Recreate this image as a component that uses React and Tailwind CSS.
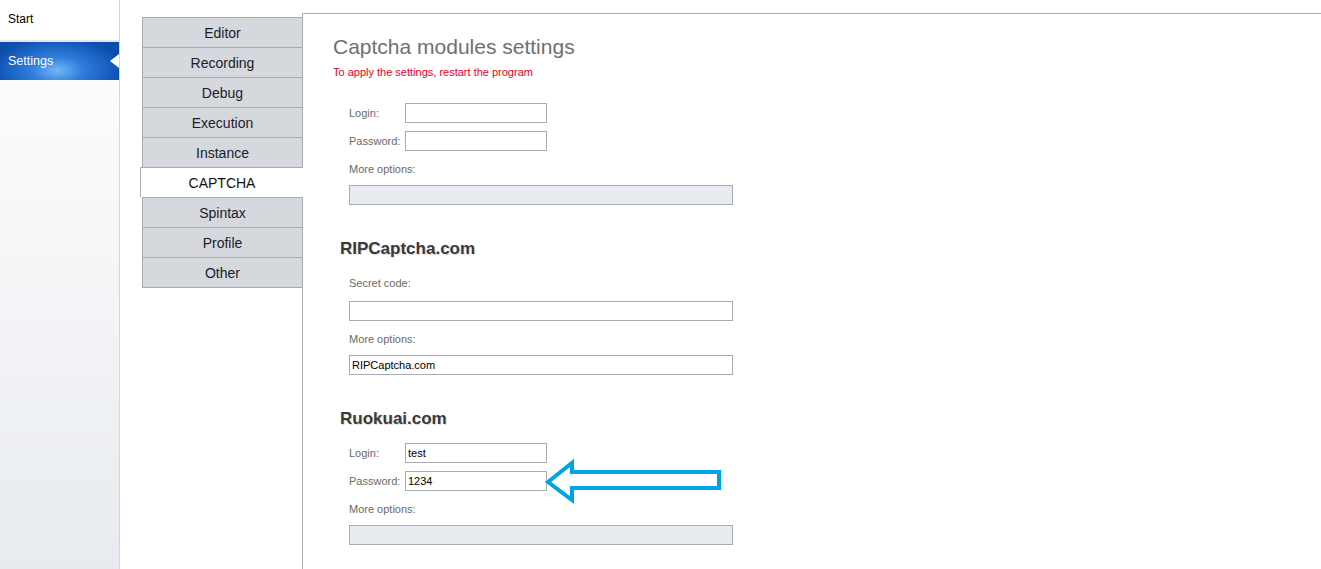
import React from 'react'

const tabs = ['Editor', 'Recording', 'Debug', 'Execution', 'Instance', 'CAPTCHA', 'Spintax', 'Profile', 'Other']

function Label({ children, className = '' }) {
  return (
    <div className={`h-[20px] flex items-center text-[11px] text-[#6a6a6a] ${className}`}>{children}</div>
  )
}

function SmallField({ label, value, className = '' }) {
  return (
    <div className={`flex items-center h-[20px] ${className}`}>
      <div className="w-[56px] text-[11px] text-[#6a6a6a]">{label}</div>
      <div className="w-[142px] h-[20px] border border-[#a9adb3] bg-white flex items-center px-[2px] text-[11px] text-black">
        {value}
      </div>
    </div>
  )
}

function WideField({ value, disabled, className = '' }) {
  return (
    <div
      className={`w-[384px] h-[20px] border border-[#a9adb3] flex items-center px-[2px] text-[11px] text-black ${
        disabled ? 'bg-[#e8ebef]' : 'bg-white'
      } ${className}`}
    >
      {value}
    </div>
  )
}

function SectionTitle({ children, className = '' }) {
  return (
    <div
      className={`ml-[7px] h-[24px] pt-[2px] flex items-center text-[17px] font-bold text-[#3a3a3a] [text-shadow:1px_1px_1px_rgba(0,0,0,0.15)] ${className}`}
    >
      {children}
    </div>
  )
}

export default function App() {
  return (
    <div className="relative flex w-[1321px] h-[569px] overflow-hidden bg-white font-['Liberation_Sans',Arial,sans-serif]">
      {/* left menu */}
      <div className="w-[120px] h-full border-r border-[#d3d6db] bg-gradient-to-b from-white to-[#e8ebef] shrink-0">
        <div className="h-[40px] pt-[12px] pl-[8px] text-[12px] leading-[14px] text-black bg-white">Start</div>
        <div className="h-[2px] bg-[#e4e7eb]" />
        <div className="relative h-[38px] flex items-center pl-[8px] pt-[1px] text-[12.5px] text-white bg-[radial-gradient(ellipse_55%_90%_at_48%_75%,#72b8f8_0%,#2f7ddb_40%,#0c4eae_100%)]">
          Settings
          <div className="absolute right-0 top-[12px] w-0 h-0 border-y-[7px] border-y-transparent border-r-[9px] border-r-white" />
        </div>
      </div>

      {/* tabs */}
      <div className="ml-[22px] w-[160px] pt-[17px] shrink-0">
        {tabs.map((t, i) => {
          const active = t === 'CAPTCHA'
          const last = i === tabs.length - 1
          return (
            <div
              key={t}
              className={`h-[30px] pt-[1px] flex items-center justify-center text-[14px] border-t border-l border-[#a7abb2] ${
                last ? 'border-b h-[31px]' : ''
              } ${
                active
                  ? 'relative z-10 -ml-[2px] w-[163px] bg-white text-[#111] border-b-0'
                  : 'bg-[#d5d8dd] text-[#1c1c2a]'
              }`}
            >
              {t}
            </div>
          )
        })}
      </div>

      {/* content panel */}
      <div className="flex-1 mt-[13px] border-t border-l border-[#a7abb2] pl-[30px]">
        <div className="mt-[21px] h-[24px] flex items-center text-[21px] text-[#707070]">Captcha modules settings</div>
        <div className="mt-[6px] h-[14px] leading-[14px] text-[11px] text-[#e5002c]">
          To apply the settings, restart the program
        </div>

        <div className="ml-[16px]">
          <SmallField label="Login:" className="mt-[24px]" />
          <SmallField label="Password:" className="mt-[8px]" />
          <Label className="mt-[8px]">More options:</Label>
          <WideField disabled className="mt-[6px]" />
        </div>

        <SectionTitle className="mt-[31px]">RIPCaptcha.com</SectionTitle>
        <div className="ml-[16px]">
          <Label className="mt-[13px]">Secret code:</Label>
          <WideField className="mt-[8px]" />
          <Label className="mt-[8px]">More options:</Label>
          <WideField value="RIPCaptcha.com" className="mt-[6px]" />
        </div>

        <SectionTitle className="mt-[31px]">Ruokuai.com</SectionTitle>
        <div className="ml-[16px]">
          <SmallField label="Login:" value="test" className="mt-[13px]" />
          <SmallField label="Password:" value="1234" className="mt-[8px]" />
          <Label className="mt-[8px]">More options:</Label>
          <WideField disabled className="mt-[6px]" />
        </div>
      </div>

      {/* annotation arrow */}
      <svg
        className="absolute left-[540px] top-[455px] pointer-events-none"
        width="190"
        height="55"
        viewBox="540 455 190 55"
      >
        <polygon
          points="548,482 572,463 572,472 719,472 719,488 572,488 572,500"
          fill="none"
          stroke="#00a3e6"
          strokeWidth="4"
          strokeLinejoin="miter"
        />
      </svg>
    </div>
  )
}
